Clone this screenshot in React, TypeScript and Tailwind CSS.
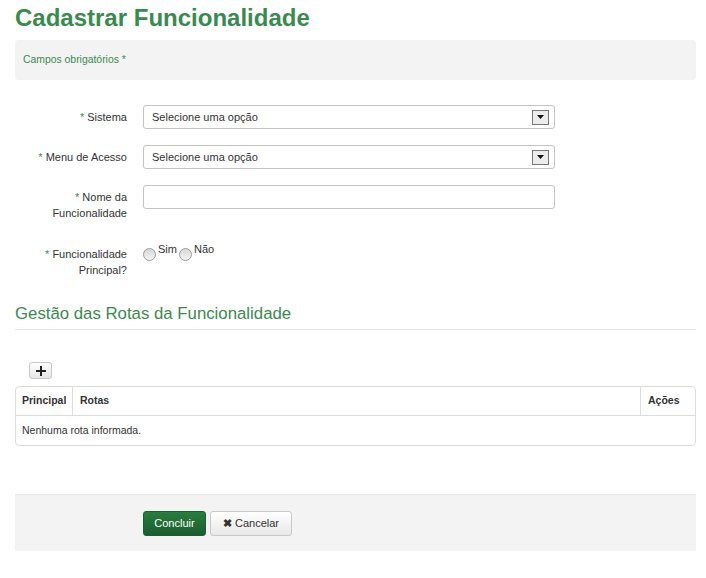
import React, { useState } from 'react';

const SelectBox: React.FC<{ value: string }> = ({ value }) => (
  <div className="flex h-6 w-[412px] items-center justify-between rounded-[3px] border border-[#c4c4c4] bg-white pl-2 pr-[5px]">
    <span className="text-[11px] text-[#333]">{value}</span>
    <span className="flex h-[15px] w-[17px] items-center justify-center border border-[#777] bg-[#ececec]">
      <svg width="7" height="4" viewBox="0 0 7 4">
        <path d="M0 0h7L3.5 4z" fill="#111" />
      </svg>
    </span>
  </div>
);

const Radio: React.FC<{ checked: boolean; onClick: () => void }> = ({ checked, onClick }) => (
  <button
    onClick={onClick}
    className="mt-[5px] flex h-[13px] w-[13px] items-center justify-center rounded-full border border-[#9a9a9a] bg-gradient-to-b from-[#d8d8d8] to-[#f4f4f4]"
  >
    {checked && <span className="h-[5px] w-[5px] rounded-full bg-[#333]" />}
  </button>
);

const Label: React.FC<{ children: React.ReactNode }> = ({ children }) => (
  <div className="w-[112px] text-right text-[11px] leading-4 text-[#333]">
    <span className="text-[#3a8a50]">* </span>
    {children}
  </div>
);

export default function App() {
  const [principal, setPrincipal] = useState<'sim' | 'nao' | null>(null);

  return (
    <div className="min-h-[578px] bg-white pl-[15px] pr-[10px] font-['Liberation_Sans',Arial,sans-serif] text-[#333]">
      <h1 className="pt-[3px] text-[24px] font-bold leading-[30px] text-[#3a8a50]">Cadastrar Funcionalidade</h1>

      <div className="mt-[7px] flex h-10 items-center rounded-sm bg-[#f3f3f3] px-2">
        <span className="text-[10.4px] text-[#3a8a50]">Campos obrigatórios *</span>
      </div>

      <div className="mt-[25px] flex flex-col">
        <div className="flex items-center gap-4">
          <Label>Sistema</Label>
          <SelectBox value="Selecione uma opção" />
        </div>
        <div className="mt-4 flex items-center gap-4">
          <Label>Menu de Acesso</Label>
          <SelectBox value="Selecione uma opção" />
        </div>
        <div className="mt-4 flex items-start gap-4">
          <div className="pt-[4px]">
            <Label>
              Nome da
              <br />
              Funcionalidade
            </Label>
          </div>
          <input className="h-6 w-[412px] rounded-[3px] border border-[#c4c4c4] bg-white px-2 text-[11px] outline-none" />
        </div>
        <div className="mt-[22px] flex items-start gap-4">
          <div className="pt-[3px]">
            <Label>
              Funcionalidade
              <br />
              Principal?
            </Label>
          </div>
          <div className="flex items-start text-[11px] leading-[13px] text-[#333]">
            <Radio checked={principal === 'sim'} onClick={() => setPrincipal('sim')} />
            <span className="ml-[2px] mr-[2px]">Sim</span>
            <Radio checked={principal === 'nao'} onClick={() => setPrincipal('nao')} />
            <span className="ml-[2px]">Não</span>
          </div>
        </div>
      </div>

      <h2 className="mt-[23px] border-b border-[#e5e5e5] pb-[4px] pt-[2px] text-[16.8px] leading-[22px] text-[#3a8a50]">
        Gestão das Rotas da Funcionalidade
      </h2>

      <button className="ml-[14px] mt-[32px] flex h-[17px] w-[23px] items-center justify-center rounded-[3px] border border-[#c8c8c8] bg-gradient-to-b from-white to-[#e6e6e6]">
        <svg width="10" height="10" viewBox="0 0 10 10">
          <path d="M4 0h2v4h4v2H6v4H4V6H0V4h4z" fill="#222" />
        </svg>
      </button>

      <div className="mt-[7px] overflow-hidden rounded-[4px] border border-[#ddd]">
        <div className="flex h-[29px] border-b border-[#ddd] text-[10.5px] font-bold text-[#333]">
          <div className="flex w-[57px] items-center border-r border-[#ddd] pl-[6px]">Principal</div>
          <div className="flex flex-1 items-center border-r border-[#ddd] pl-[7px]">Rotas</div>
          <div className="flex w-[54px] items-center pl-[7px]">Ações</div>
        </div>
        <div className="flex h-[29px] items-center pl-[6px] text-[10.5px] text-[#333]">Nenhuma rota informada.</div>
      </div>

      <div className="mt-[48px] flex h-[57px] items-center gap-[4px] border-t border-[#e5e5e5] bg-[#f3f3f3] pl-[128px]">
        <button className="flex h-[25px] w-[63px] items-center justify-center rounded-[3px] border border-[#1d5e30] bg-gradient-to-b from-[#2a7c40] to-[#1b5e2e] text-[11px] text-white">
          Concluir
        </button>
        <button className="flex h-[25px] w-[82px] items-center justify-center gap-[3px] rounded-[3px] border border-[#c8c8c8] bg-gradient-to-b from-white to-[#e8e8e8] text-[11px] text-[#333]">
          <span className="text-[11px] font-bold leading-none">✖</span>
          Cancelar
        </button>
      </div>
    </div>
  );
}
